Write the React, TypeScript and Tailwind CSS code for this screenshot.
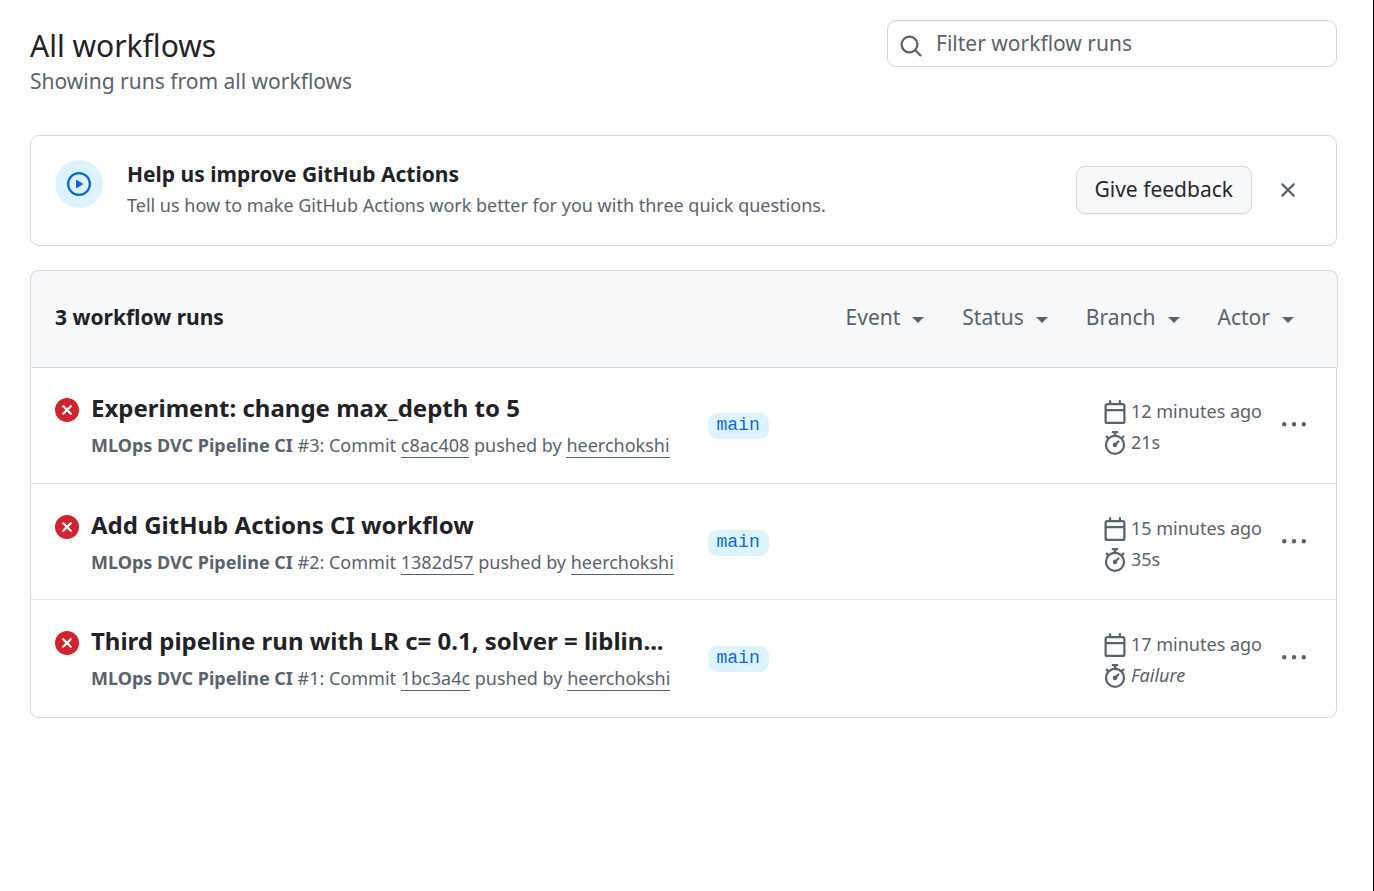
import { useState } from "react";

const ICONS = {
  xCircle:
    "M2.343 13.657A8 8 0 1 1 13.658 2.343 8 8 0 0 1 2.343 13.657ZM6.03 4.97a.751.751 0 0 0-1.042.018.751.751 0 0 0-.018 1.042L6.94 8 4.97 9.97a.749.749 0 0 0 .326 1.275.749.749 0 0 0 .734-.215L8 9.06l1.97 1.97a.749.749 0 0 0 1.275-.326.749.749 0 0 0-.215-.734L9.06 8l1.97-1.97a.749.749 0 0 0-.326-1.275.749.749 0 0 0-.734.215L8 6.94Z",
  play: "M8 0a8 8 0 1 1 0 16A8 8 0 0 1 8 0ZM1.5 8a6.5 6.5 0 1 0 13 0 6.5 6.5 0 0 0-13 0Zm4.879-2.773 4.264 2.559a.25.25 0 0 1 0 .428l-4.264 2.559A.25.25 0 0 1 6 10.559V5.442a.25.25 0 0 1 .379-.215Z",
  search:
    "M10.68 11.74a6 6 0 0 1-7.922-8.982 6 6 0 0 1 8.982 7.922l3.04 3.04a.749.749 0 0 1-.326 1.275.749.749 0 0 1-.734-.215ZM11.5 7a4.499 4.499 0 1 0-8.997 0A4.499 4.499 0 0 0 11.5 7Z",
  x: "M3.72 3.72a.75.75 0 0 1 1.06 0L8 6.94l3.22-3.22a.749.749 0 0 1 1.275.326.749.749 0 0 1-.215.734L9.06 8l3.22 3.22a.749.749 0 0 1-.326 1.275.749.749 0 0 1-.734-.215L8 9.06l-3.22 3.22a.751.751 0 0 1-1.042-.018.751.751 0 0 1-.018-1.042L6.94 8 3.72 4.78a.75.75 0 0 1 0-1.06Z",
  calendar:
    "M4.75 0a.75.75 0 0 1 .75.75V2h5V.75a.75.75 0 0 1 1.5 0V2h1.25c.966 0 1.75.784 1.75 1.75v10.5A1.75 1.75 0 0 1 13.25 16H2.75A1.75 1.75 0 0 1 1 14.25V3.75C1 2.784 1.784 2 2.75 2H4V.75A.75.75 0 0 1 4.75 0ZM2.5 7.5v6.75c0 .138.112.25.25.25h10.5a.25.25 0 0 0 .25-.25V7.5Zm10.75-4H2.75a.25.25 0 0 0-.25.25V6h11V3.75a.25.25 0 0 0-.25-.25Z",
  stopwatch:
    "M5.75.75A.75.75 0 0 1 6.5 0h3a.75.75 0 0 1 0 1.5h-.75v1l-.001.041a6.724 6.724 0 0 1 3.464 1.435l.007-.006.75-.75a.749.749 0 0 1 1.275.326.749.749 0 0 1-.215.734l-.75.75-.006.007a6.75 6.75 0 1 1-10.548 0L2.72 5.03l-.75-.75a.751.751 0 0 1 .018-1.042.751.751 0 0 1 1.042-.018l.75.75.007.006A6.72 6.72 0 0 1 7.25 2.541V1.5H6.5a.75.75 0 0 1-.75-.75ZM8 14.5a5.25 5.25 0 1 0-.001-10.501A5.25 5.25 0 0 0 8 14.5Zm.389-6.7 1.33-1.33a.75.75 0 1 1 1.061 1.06L9.45 8.861A1.503 1.503 0 0 1 8 10.75a1.499 1.499 0 1 1 .389-2.95Z",
  kebab:
    "M8 9a1.5 1.5 0 1 0 0-3 1.5 1.5 0 0 0 0 3ZM1.5 9a1.5 1.5 0 1 0 0-3 1.5 1.5 0 0 0 0 3Zm13 0a1.5 1.5 0 1 0 0-3 1.5 1.5 0 0 0 0 3Z",
};

function Icon({ name, className = "" }: { name: keyof typeof ICONS; className?: string }) {
  return (
    <svg viewBox="0 0 16 16" fill="currentColor" aria-hidden="true" className={`size-6 shrink-0 ${className}`}>
      <path d={ICONS[name]} />
    </svg>
  );
}

interface Run {
  number: number;
  title: string;
  commit: string;
  age: string;
  duration: string;
  failed?: boolean;
}

const RUNS: Run[] = [
  { number: 3, title: "Experiment: change max_depth to 5", commit: "c8ac408", age: "12 minutes ago", duration: "21s" },
  { number: 2, title: "Add GitHub Actions CI workflow", commit: "1382d57", age: "15 minutes ago", duration: "35s" },
  {
    number: 1,
    title: "Third pipeline run with LR c= 0.1, solver = liblin...",
    commit: "1bc3a4c",
    age: "17 minutes ago",
    duration: "Failure",
    failed: true,
  },
];

const FILTERS = ["Event", "Status", "Branch", "Actor"];

function RunRow({ run }: { run: Run }) {
  return (
    <li className="flex min-h-[116px] items-start border-b border-[#d1d9e0b3] pt-6 first:pt-[23px] last:min-h-[117px] last:border-b-0">
      <div className="flex w-1/2 shrink-0 gap-3 pr-2 pl-6">
        <Icon name="xCircle" className="mt-[7px] text-[#d1242f]" />
        <div className="min-w-0">
          <a href="#run" className="block truncate text-2xl leading-[34px] font-bold text-[#1f2328]">
            {run.title}
          </a>
          <p className="mt-[7px] text-lg leading-[27px] whitespace-nowrap">
            <b className="font-bold">MLOps DVC Pipeline CI</b> #{run.number}: Commit{" "}
            <a href="#commit" className="border-b border-[#59636e]">
              {run.commit}
            </a>{" "}
            pushed by{" "}
            <a href="#user" className="border-b border-[#59636e]">
              heerchokshi
            </a>
          </p>
        </div>
      </div>
      <div className="flex-1 pt-4 pl-6">
        <a
          href="#branch"
          className="inline-block rounded-[9px] bg-[#ddf4ff] px-[9px] pb-[2px] font-['Liberation_Mono',monospace] text-lg leading-6 text-[#0969da]"
        >
          main
        </a>
      </div>
      <div className="flex flex-col gap-1 pt-[7px] text-lg leading-[27px]">
        <div className="flex items-center gap-1">
          <Icon name="calendar" />
          {run.age}
        </div>
        <div className="flex items-center gap-1">
          <Icon name="stopwatch" />
          {run.failed ? <i>{run.duration}</i> : run.duration}
        </div>
      </div>
      <button type="button" aria-label="Show options" className="mr-[30px] ml-5 pt-[22px]">
        <Icon name="kebab" />
      </button>
    </li>
  );
}

export default function App() {
  const [showBanner, setShowBanner] = useState(true);
  return (
    <main className="min-h-screen border-r border-black bg-white px-[30px] pt-5 pr-9 font-['Noto_Sans',sans-serif] text-[21px] text-[#59636e]">
      <header className="flex items-start justify-between">
        <div className="pt-[3px]">
          <h1 className="text-3xl leading-[45px] font-normal text-[#1f2328]">All workflows</h1>
          <p className="leading-[26px]">Showing runs from all workflows</p>
        </div>
        <label className="flex h-[47px] w-[450px] items-center rounded-[9px] border border-[#d1d9e0] pl-[11px] shadow-[inset_0_1px_0_#1f23280a]">
          <Icon name="search" className="mt-1" />
          <input
            type="text"
            aria-label="Filter workflow runs"
            placeholder="Filter workflow runs"
            className="ml-[13px] min-w-0 flex-1 bg-transparent outline-none placeholder:text-[#59636e]"
          />
        </label>
      </header>

      {showBanner && (
        <section className="mt-[41px] flex h-[111px] items-start rounded-[9px] border border-[#d1d9e0] px-6 pt-6">
          <span className="flex size-12 items-center justify-center rounded-full bg-[#ddf4ff] text-[#0969da]">
            <Icon name="play" />
          </span>
          <div className="ml-6 flex-1">
            <h2 className="leading-7 font-bold text-[#1f2328]">Help us improve GitHub Actions</h2>
            <p className="mt-1 text-lg leading-[27px]">
              Tell us how to make GitHub Actions work better for you with three quick questions.
            </p>
          </div>
          <div className="flex items-center gap-6 pt-[6px] pr-3">
            <button
              type="button"
              className="h-12 rounded-[9px] border border-[#d1d9e0] bg-[#f6f8fa] px-[18px] text-[#25292e] shadow-[0_1px_0_#1f23280a]"
            >
              Give feedback
            </button>
            <button type="button" aria-label="Dismiss" onClick={() => setShowBanner(false)}>
              <Icon name="x" />
            </button>
          </div>
        </section>
      )}

      <section className="mt-6">
        <div className="-mr-px flex h-[98px] items-center justify-between rounded-t-[9px] border border-[#d1d9e0] bg-[#f6f8fa] pr-[43px] pb-[2px] pl-6">
          <h2 className="font-bold text-[#1f2328]">3 workflow runs</h2>
          <div className="flex gap-[38px]">
            {FILTERS.map((filter) => (
              <button key={filter} type="button" className="flex items-center gap-3">
                {filter}
                <svg viewBox="0 0 12 6" fill="currentColor" aria-hidden="true" className="mt-1 h-[6px] w-3">
                  <path d="M0 0h12L6 6z" />
                </svg>
              </button>
            ))}
          </div>
        </div>
        <ul className="rounded-b-[9px] border border-t-0 border-[#d1d9e0]">
          {RUNS.map((run) => (
            <RunRow key={run.number} run={run} />
          ))}
        </ul>
      </section>
    </main>
  );
}
